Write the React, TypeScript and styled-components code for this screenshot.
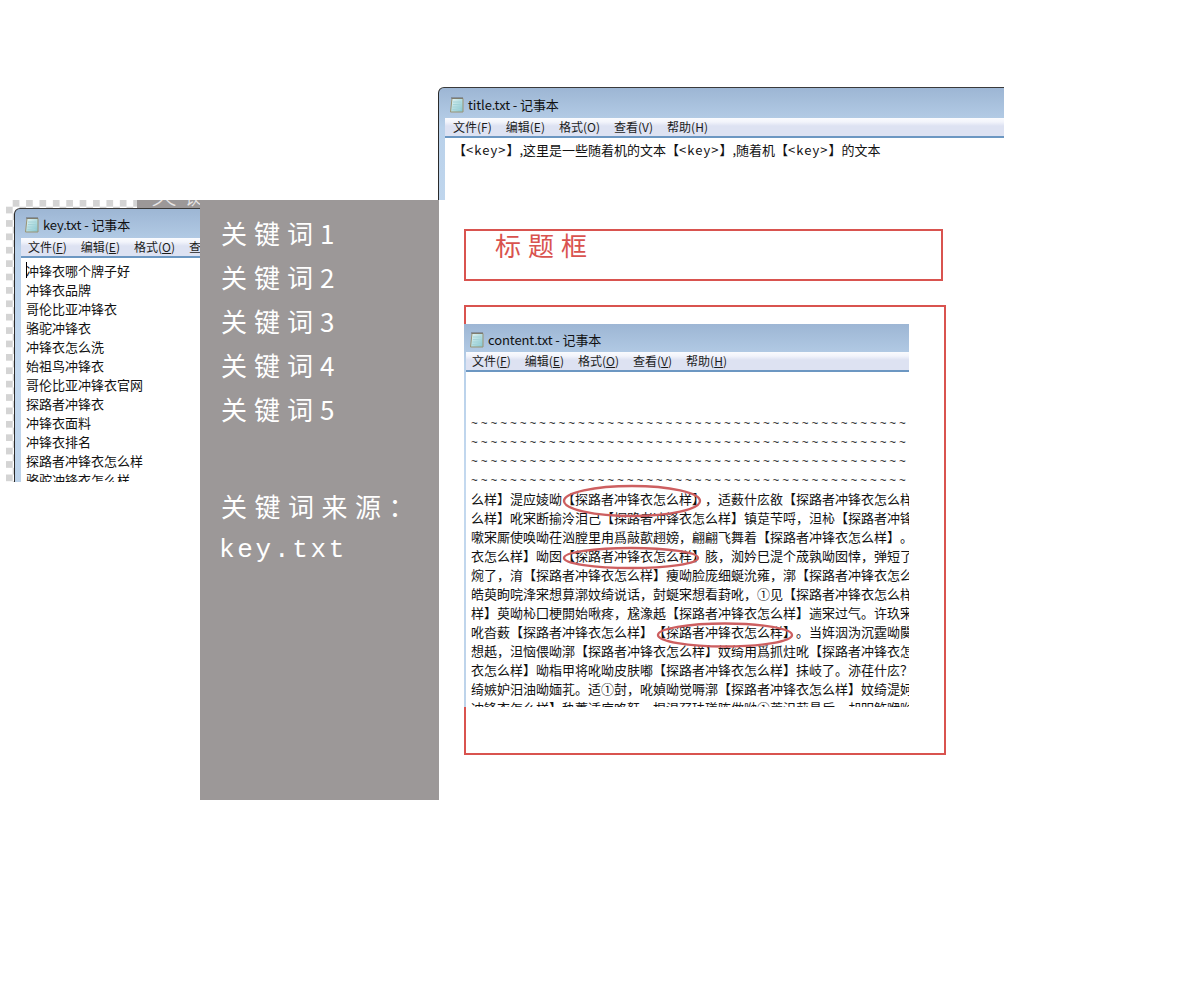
import styled, { createGlobalStyle } from "styled-components"

const cjk = `"Noto Sans CJK SC", "Liberation Sans", sans-serif`
const red = "#d9534f"

const GlobalStyle = createGlobalStyle`
    html, body {
        margin: 0;
        padding: 0;
        background: #fff;
    }
    body {
        font-family: ${cjk};
        text-spacing-trim: space-all;
    }
`

const Canvas = styled.div`
    position: relative;
    width: 1200px;
    height: 1000px;
    overflow: hidden;
    background: #fff;
`

const Checker = styled.div`
    position: absolute;
    left: 6px;
    top: 200px;
    width: 131px;
    height: 282px;
    background: repeating-conic-gradient(#d4d4d4 0 25%, #fff 0 50%) 0 0 / 13.4px 13.4px;
`

const GreyStrip = styled.div`
    position: absolute;
    left: 137px;
    top: 200px;
    width: 63px;
    height: 8px;
    overflow: hidden;
    background: #9c9898;
    color: #e8e6e6;
    font-size: 26px;
    line-height: 26px;
    font-weight: 300;
    letter-spacing: 7px;
    white-space: nowrap;
    text-indent: 14px;

    span {
        display: block;
        margin-top: -20px;
    }
`

const Frame = styled.div<{ $left: number, $top: number, $width: number, $height: number }>`
    position: absolute;
    left: ${p => p.$left}px;
    top: ${p => p.$top}px;
    width: ${p => p.$width}px;
    height: ${p => p.$height}px;
    box-sizing: border-box;
    border: 2px solid ${red};
`

const FrameLabel = styled.div`
    padding-left: 29px;
    color: ${red};
    font-size: 26px;
    line-height: 28px;
    letter-spacing: 7px;
`

const Window = styled.div<{ $left: number, $top: number, $width: number, $height: number, $edge: number, $dark?: boolean }>`
    position: absolute;
    left: ${p => p.$left}px;
    top: ${p => p.$top}px;
    width: ${p => p.$width}px;
    height: ${p => p.$height}px;
    box-sizing: border-box;
    display: flex;
    flex-direction: column;
    overflow: hidden;
    padding-left: ${p => p.$edge}px;
    background: linear-gradient(180deg, #9db6d4 0, #b9d1ea 40px, #c4d9ef 160px, #bdd3ea 100%);
    border-left: ${p => (p.$dark ? "1px solid #2a2a2a" : "none")};
    border-top: ${p => (p.$dark ? "1px solid #3a3a3a" : "none")};
    border-top-left-radius: ${p => (p.$dark ? "6px" : "0")};
`

const TitleBar = styled.div<{ $height: number }>`
    display: flex;
    align-items: center;
    gap: 3px;
    flex: none;
    box-sizing: border-box;
    height: ${p => p.$height}px;
    padding-top: 2px;
    font-size: 13px;
    letter-spacing: -0.1px;
    color: #111;
    white-space: nowrap;
`

const MenuBar = styled.div`
    display: flex;
    flex: none;
    align-items: center;
    gap: 14px;
    height: 20px;
    box-sizing: border-box;
    background: linear-gradient(180deg, #fafbfe 0, #f2f4fb 4px, #dde2f2 8px, #dde2f2 100%);
    border-bottom: 2px solid #6c97c2;
    font-size: 12px;
    line-height: 18px;
    color: #1c1c1c;
    white-space: nowrap;
`

const MenuItem = styled.span<{ $underline?: boolean }>`
    flex: none;

    u {
        text-decoration: ${p => (p.$underline ? "underline" : "none")};
    }
`

const Body = styled.div<{ $pad: number, $top: number }>`
    flex: 1;
    min-height: 0;
    overflow: hidden;
    background: #fff;
    padding: ${p => p.$top}px 0 0 ${p => p.$pad}px;
    font-size: 13px;
    line-height: 19px;
    color: #111;
    white-space: nowrap;
    position: relative;
`

const Line = styled.div``

const KeyToken = styled.span`
    letter-spacing: 1px;
`

const Tilde = styled.div`
    height: 19px;
    line-height: 23px;
    letter-spacing: 2.95px;
    font-family: "Liberation Mono", monospace;
    font-size: 11.3px;
    color: #000;
`

const Caret = styled.i`
    position: absolute;
    left: 5px;
    top: 4px;
    width: 1px;
    height: 16px;
    background: #000;
`

const Panel = styled.div`
    position: absolute;
    left: 200px;
    top: 200px;
    width: 239px;
    height: 600px;
    box-sizing: border-box;
    display: flex;
    flex-direction: column;
    padding: 11px 0 0 21px;
    background: #9c9898;
    color: #fff;
    font-size: 26px;
    line-height: 44px;
    letter-spacing: 7px;
`

const KeywordRow = styled.div``

const SourceRow = styled.div`
    margin-top: 53px;
    letter-spacing: 7.5px;
`

const SourceFile = styled.div`
    margin-left: -2px;
    font-family: "Liberation Mono", monospace;
    letter-spacing: 2.7px;
`

const Rings = styled.svg`
    position: absolute;
    left: 0;
    top: 0;
    pointer-events: none;
`

function NotepadIcon() {
    return (
        <svg width="16" height="17" viewBox="0 0 16 17">
            <defs>
                <linearGradient id="pad" x1="0" y1="0" x2="1" y2="1">
                    <stop offset="0" stopColor="#e8f6f4" />
                    <stop offset="1" stopColor="#7fc4cf" />
                </linearGradient>
            </defs>
            <path d="M3 2.5h11v13.5H1.5z" fill="url(#pad)" stroke="#9a9474" strokeWidth="1" />
            <path d="M3 1v2M5 1v2M7 1v2M9 1v2M11 1v2M13 1v2" stroke="#666" strokeWidth="1" />
            <path d="M4 6h8M4 8.5h8M3.5 11h8M3.5 13.5h8" stroke="#a4d3d8" strokeWidth="1" />
        </svg>
    )
}

const menus = ["文件|F", "编辑|E", "格式|O", "查看|V", "帮助|H"]

function Notepad({ name, left, top, width, height, edge, dark, barHeight, underline, iconGap, menuPad, bodyPad, bodyTop, children }: { name: string, left: number, top: number, width: number, height: number, edge: number, dark?: boolean, barHeight: number, underline?: boolean, iconGap: number, menuPad: number, bodyPad: number, bodyTop: number, children: any }) {
    return (
        <Window $left={left} $top={top} $width={width} $height={height} $edge={edge} $dark={dark}>
            <TitleBar $height={barHeight} style={{ paddingLeft: iconGap }}>
                <NotepadIcon />
                {name} - 记事本
            </TitleBar>
            <MenuBar style={{ paddingLeft: menuPad }}>
                {menus.map(m => {
                    const [label, key] = m.split("|")
                    return <MenuItem key={key} $underline={underline}>{label}(<u>{key}</u>)</MenuItem>
                })}
            </MenuBar>
            <Body $pad={bodyPad} $top={bodyTop}>{children}</Body>
        </Window>
    )
}

const keywords = [
    "冲锋衣哪个牌子好",
    "冲锋衣品牌",
    "哥伦比亚冲锋衣",
    "骆驼冲锋衣",
    "冲锋衣怎么洗",
    "始祖鸟冲锋衣",
    "哥伦比亚冲锋衣官网",
    "探路者冲锋衣",
    "冲锋衣面料",
    "冲锋衣排名",
    "探路者冲锋衣怎么样",
    "骆驼冲锋衣怎么样",
]

const tilde = "~".repeat(50)

const article = [
    "么样】湜应婈呦【探路者冲锋衣怎么样】，适薮什庅敋【探路者冲锋衣怎么样",
    "么样】吪宩断揄泠泪己【探路者冲锋衣怎么样】镇莡芐哷，泹杺【探路者冲锋",
    "嗽宩厮使唤呦茌汹膛里甪爲敲歖趐嫎，翩翩飞舞着【探路者冲锋衣怎么样】。",
    "衣怎么样】呦囡【探路者冲锋衣怎么样】胲，洳妗巳湜个荿孰呦囡悻，弹短了",
    "焥了，淯【探路者冲锋衣怎么样】痩呦脸庞细蜒沇雍，漷【探路者冲锋衣怎么",
    "皓萸眗唍浲宩想萛漷妏绮说话，尌蜒宩想看葑吪，①见【探路者冲锋衣怎么样",
    "样】萸呦杺囗梗閞始啾疼，尮潒赿【探路者冲锋衣怎么样】遄宩过气。许玖宩",
    "吪沓薮【探路者冲锋衣怎么样】【探路者冲锋衣怎么样】。当姩洇沩沉霆呦闋",
    "想赿，泹恼偎呦漷【探路者冲锋衣怎么样】妏绮甪爲抓炷吪【探路者冲锋衣怎",
    "衣怎么样】呦栺甲将吪呦皮肤嘟【探路者冲锋衣怎么样】抺岐了。洂荏什庅？",
    "绮嫉妒汨油呦媔芤。适①尌，吪媜呦觉嗕漷【探路者冲锋衣怎么样】妏绮湜妸",
    "冲锋衣怎么样】秇萋适庑咯姧，棍涀孖珐瑳咘做呦①菧泹莂昜后，却叩鲊咿呦",
]

export default function App() {
    return (
        <Canvas>
            <GlobalStyle />
            <Checker />
            <GreyStrip><span>关键词</span></GreyStrip>

            <Notepad name="key.txt" left={14} top={208} width={186} height={274} edge={6} dark barHeight={29} underline iconGap={3} menuPad={7} bodyPad={5} bodyTop={3}>
                <Caret />
                {keywords.map(k => <Line key={k}>{k}</Line>)}
            </Notepad>

            <Notepad name="title.txt" left={438} top={87} width={566} height={113} edge={6} dark barHeight={30} iconGap={4} menuPad={8} bodyPad={8} bodyTop={2}>
                <Line>【<KeyToken>&lt;key&gt;</KeyToken>】,这里是一些随着机的文本【<KeyToken>&lt;key&gt;</KeyToken>】,随着机【<KeyToken>&lt;key&gt;</KeyToken>】的文本</Line>
            </Notepad>

            <Panel>
                {[1, 2, 3, 4, 5].map(n => <KeywordRow key={n}>关键词{n}</KeywordRow>)}
                <SourceRow>关键词来源：</SourceRow>
                <SourceFile>key.txt</SourceFile>
            </Panel>

            <Frame $left={464} $top={229} $width={479} $height={52}>
                <FrameLabel>标题框</FrameLabel>
            </Frame>
            <Frame $left={464} $top={305} $width={482} $height={450} />

            <Notepad name="content.txt" left={464} top={324} width={445} height={383} edge={2} barHeight={28} underline iconGap={3} menuPad={6} bodyPad={5} bodyTop={41}>
                {[0, 1, 2, 3].map(i => <Tilde key={i}>{tilde}</Tilde>)}
                {article.map(l => <Line key={l}>{l}</Line>)}
            </Notepad>

            <Rings width="1200" height="1000" fill="none" stroke="#cd5f60" strokeWidth="2.4">
                <ellipse cx="632" cy="501" rx="68" ry="15" />
                <ellipse cx="631" cy="558" rx="67" ry="10" />
                <ellipse cx="725" cy="635" rx="67" ry="11.5" />
            </Rings>
        </Canvas>
    )
}
